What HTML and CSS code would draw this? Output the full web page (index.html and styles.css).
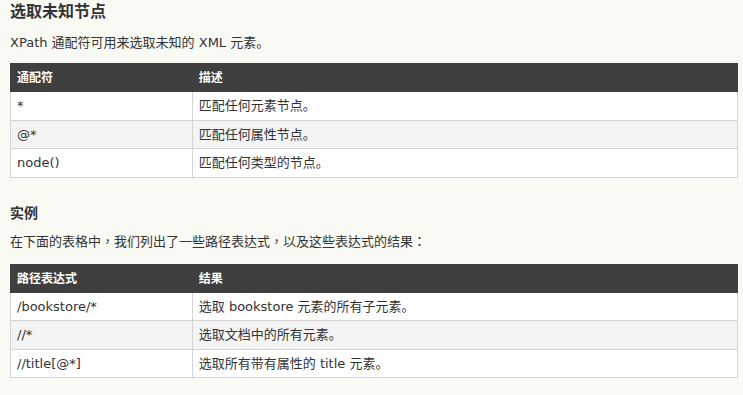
FILE: index.html
```html
<!DOCTYPE html>
<html lang="zh-CN">
<head>
  <meta charset="UTF-8" />
  <title>XPath 语法 - 选取未知节点</title>
  <link rel="stylesheet" href="styles.css">
</head>
<body>

  <h2>选取未知节点</h2>
  <p class="intro">XPath 通配符可用来选取未知的 XML 元素。</p>

  <table class="reference">
    <tr>
      <th class="first">通配符</th>
      <th>描述</th>
    </tr>
    <tr>
      <td>*</td>
      <td>匹配任何元素节点。</td>
    </tr>
    <tr>
      <td>@*</td>
      <td>匹配任何属性节点。</td>
    </tr>
    <tr>
      <td>node()</td>
      <td>匹配任何类型的节点。</td>
    </tr>
  </table>

  <h3>实例</h3>
  <p class="lead" lang="zh-TW">在下面的表格中，我们列出了一些路径表达式，以及这些表达式的结果：</p>

  <table class="reference">
    <tr>
      <th class="first">路径表达式</th>
      <th>结果</th>
    </tr>
    <tr>
      <td>/bookstore/*</td>
      <td>选取 bookstore 元素的所有子元素。</td>
    </tr>
    <tr>
      <td>//*</td>
      <td>选取文档中的所有元素。</td>
    </tr>
    <tr>
      <td>//title[@*]</td>
      <td>选取所有带有属性的 title 元素。</td>
    </tr>
  </table>

</body>
</html>
```

FILE: styles.css
```css
body {
  font-family: "DejaVu Sans", "Noto Sans CJK SC", sans-serif;
  font-size: 13px;
  color: #333;
  background-color: #fafaf5;
  margin: 0;
  padding: 0 5px 0 10px;
}

h2 {
  font-size: 16px;
  line-height: 24px;
  margin: 0 0 9px;
  color: #333;
}

h3 {
  font-size: 14px;
  line-height: 24px;
  margin: 23px 0 7px;
  color: #333;
}

p {
  line-height: 20px;
  margin: 0;
}

.intro {
  margin-bottom: 10px;
}

/* centred full-width punctuation in this sentence */
.lead {
  font-family: "DejaVu Sans", "Noto Sans CJK TC", sans-serif;
  margin-bottom: 12px;
}

.reference {
  width: 100%;
  border-collapse: collapse;
  border: 1px solid #c8c8c8;
  background-color: #fff;
}

.reference th {
  background-color: #3f3f3f;
  color: #fff;
  font-size: 12px;
  text-align: left;
  line-height: 14px;
  padding: 7px 6px 6px;
  border: 1px solid #3f3f3f;
}

.reference th.first {
  width: 25%;
}

.reference td {
  line-height: 13.5px;
  padding: 7px 6px;
  border: 1px solid #d4d4d4;
}

.reference tr:nth-child(odd) td {
  background-color: #f4f4f4;
}
```
